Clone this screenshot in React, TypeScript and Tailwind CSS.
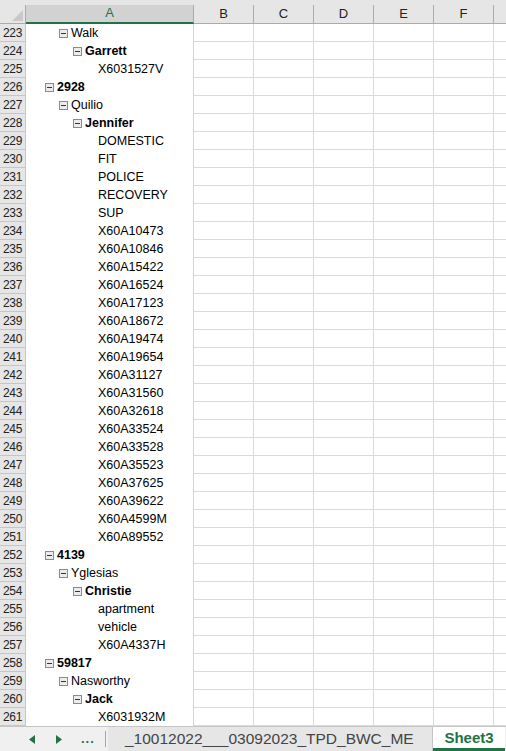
import React from "react";

type Row = { n: number; level: number; text: string };

const rows: Row[] = [
  { n: 223, level: 2, text: "Walk" },
  { n: 224, level: 3, text: "Garrett" },
  { n: 225, level: 4, text: "X6031527V" },
  { n: 226, level: 1, text: "2928" },
  { n: 227, level: 2, text: "Quilio" },
  { n: 228, level: 3, text: "Jennifer" },
  ...[
    "DOMESTIC",
    "FIT",
    "POLICE",
    "RECOVERY",
    "SUP",
    "X60A10473",
    "X60A10846",
    "X60A15422",
    "X60A16524",
    "X60A17123",
    "X60A18672",
    "X60A19474",
    "X60A19654",
    "X60A31127",
    "X60A31560",
    "X60A32618",
    "X60A33524",
    "X60A33528",
    "X60A35523",
    "X60A37625",
    "X60A39622",
    "X60A4599M",
    "X60A89552",
  ].map((text, i) => ({ n: 229 + i, level: 4, text })),
  { n: 252, level: 1, text: "4139" },
  { n: 253, level: 2, text: "Yglesias" },
  { n: 254, level: 3, text: "Christie" },
  { n: 255, level: 4, text: "apartment" },
  { n: 256, level: 4, text: "vehicle" },
  { n: 257, level: 4, text: "X60A4337H" },
  { n: 258, level: 1, text: "59817" },
  { n: 259, level: 2, text: "Nasworthy" },
  { n: 260, level: 3, text: "Jack" },
  { n: 261, level: 4, text: "X6031932M" },
];

const indent: Record<number, string> = {
  1: "pl-[19px]",
  2: "pl-[33px]",
  3: "pl-[47px]",
  4: "pl-[72px]",
};

const MinusBox = () => (
  <svg width="9" height="9" viewBox="0 0 9 9" className="mr-[3px] shrink-0">
    <rect x="0.5" y="0.5" width="8" height="8" fill="#ececec" stroke="#8a8a8a" />
    <rect x="2" y="4" width="5" height="1" fill="#333" />
  </svg>
);

const otherCols = ["B", "C", "D", "E", "F"];

export default function App() {
  return (
    <div
      className="flex h-[751px] w-[506px] flex-col overflow-hidden bg-white text-black"
      style={{ fontFamily: '"Liberation Sans", Arial, sans-serif' }}
    >
      {/* column headers */}
      <div className="h-[5px] shrink-0 bg-[#e6e6e6]" />
      <div className="flex h-[19px] shrink-0 bg-[#e6e6e6] text-[13px]">
        <div className="relative w-[26px] shrink-0 border-r border-b border-[#ababab]">
          <svg width="11" height="11" viewBox="0 0 11 11" className="absolute top-[5px] left-[12px]">
            <polygon points="11,0 11,11 0,11" fill="#c8c8c8" />
          </svg>
        </div>
        <div className="flex w-[168px] shrink-0 items-center justify-center border-r border-b-2 border-r-[#ababab] border-b-[#217346] bg-[#d2d2d2] pb-[1px] text-[#217346]">
          A
        </div>
        {otherCols.map((c) => (
          <div
            key={c}
            className="flex w-[60px] shrink-0 items-center justify-center border-r border-b border-[#ababab] text-[#222]"
          >
            {c}
          </div>
        ))}
        <div className="flex-1 border-b border-[#ababab]" />
      </div>

      {/* grid */}
      <div className="flex flex-col">
        {rows.map((r) => (
          <div key={r.n} className="flex h-[18px] shrink-0">
            <div className="flex w-[26px] shrink-0 items-center justify-center border-r border-b border-[#c6c6c6] bg-[#e6e6e6] text-[12px] tracking-[-0.3px] text-[#222]">
              {r.n}
            </div>
            <div
              className={`flex w-[168px] shrink-0 items-center border-r border-[#d4d4d4] text-[12.5px] ${indent[r.level]} ${
                r.level === 1 || r.level === 3 ? "font-bold" : ""
              }`}
            >
              {r.level < 4 && <MinusBox />}
              <span className="leading-none">{r.text}</span>
            </div>
            {otherCols.map((c) => (
              <div key={c} className="w-[60px] shrink-0 border-r border-b border-[#dadada]" />
            ))}
            <div className="flex-1 border-b border-[#dadada]" />
          </div>
        ))}
      </div>

      {/* sheet tabs */}
      <div className="flex h-[25px] shrink-0 items-stretch border-t border-[#c6c6c6] bg-[#f0f0f0]">
        <div className="flex w-[106px] shrink-0 items-center">
          <svg width="6" height="9" viewBox="0 0 6 9" className="ml-[29px]">
            <polygon points="6,0 6,9 0,4.5" fill="#217346" />
          </svg>
          <svg width="6" height="9" viewBox="0 0 6 9" className="ml-[21px]">
            <polygon points="0,0 0,9 6,4.5" fill="#217346" />
          </svg>
          <span className="ml-[19px] text-[13px] font-bold tracking-[1px] text-[#217346]">...</span>
          <div className="ml-auto h-[16px] w-px bg-[#a6a6a6]" />
        </div>
        <div className="ml-[2px] flex w-[325px] shrink-0 items-center border-r border-[#c6c6c6] bg-[#e6e6e6] pl-[17px] text-[15.5px] text-[#444]">
          _10012022___03092023_TPD_BWC_ME
        </div>
        <div className="flex w-[72px] shrink-0 items-center justify-center border-b-[3px] border-[#217346] bg-white pt-[2px] text-[15px] font-bold text-[#217346]">
          Sheet3
        </div>
      </div>
    </div>
  );
}
